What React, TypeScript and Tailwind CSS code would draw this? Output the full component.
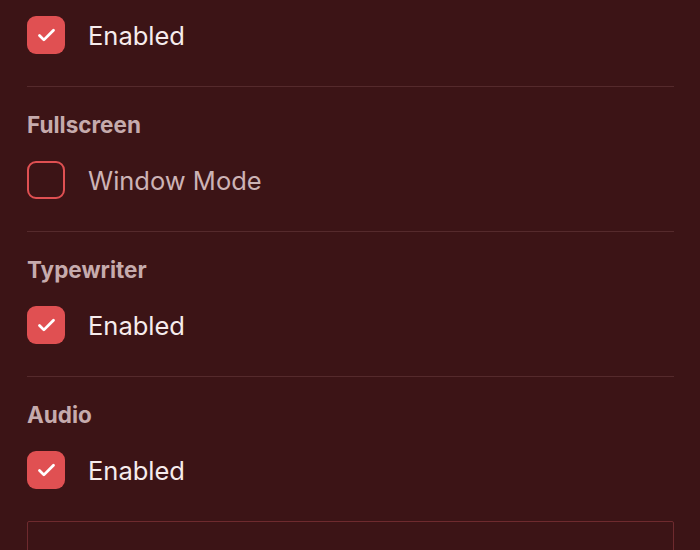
import { Check } from "lucide-react";

const sections = [
  { title: "Fullscreen", label: "Window Mode", checked: false },
  { title: "Typewriter", label: "Enabled", checked: true },
  { title: "Audio", label: "Enabled", checked: true },
];

function Checkbox({ checked, label }: { checked: boolean; label: string }) {
  return (
    <label className="flex items-center gap-[23px] h-[38px]">
      {checked ? (
        <span className="w-[38px] h-[38px] rounded-[9px] bg-[#e05052] flex items-center justify-center">
          <Check size={21} strokeWidth={3.2} className="text-white" />
        </span>
      ) : (
        <span className="w-[38px] h-[38px] rounded-[9px] border-[2.5px] border-[#e05052]" />
      )}
      <span
        className={`text-[25.5px] leading-none pt-[2px] ${checked ? "text-[#f6ecec]" : "text-[#ccb3b5]"}`}
      >
        {label}
      </span>
    </label>
  );
}

export default function App() {
  return (
    <div
      className="w-[700px] h-[550px] overflow-hidden bg-[#3c1416] pl-[27px] pr-[26px]"
      style={{ fontFamily: "Inter, 'Noto Sans', sans-serif" }}
    >
      {/* top row, rest scrolled away */}
      <div className="pt-[16px] pb-[32px] border-b border-[#552a2c]">
        <Checkbox checked label="Enabled" />
      </div>

      {sections.map((s, i) => (
        <div
          key={s.title}
          className={`pt-[24px] pb-[32px] ${i < sections.length - 1 ? "border-b border-[#552a2c]" : ""}`}
        >
          <h3 className="text-[22.5px] leading-[28px] font-bold text-[#c6abad] mb-[22px]">
            {s.title}
          </h3>
          <Checkbox checked={s.checked} label={s.label} />
        </div>
      ))}

      <div className="h-[60px] border border-[#6e2a2e] rounded-t-[2px]" />
    </div>
  );
}
